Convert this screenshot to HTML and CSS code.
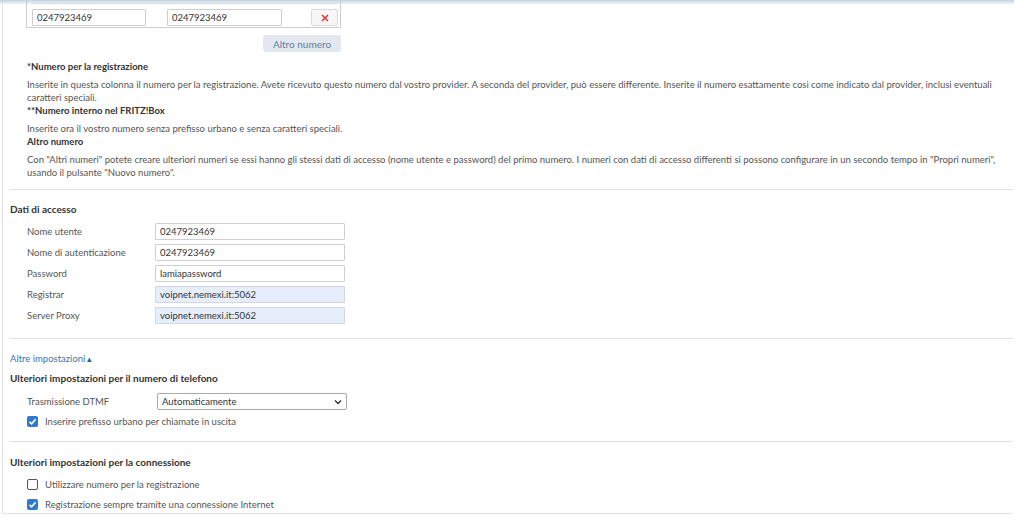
FILE: index.html
```html
<!DOCTYPE html>
<html lang="it">
<head>
    <meta charset="UTF-8">
    <title>Telefonia - Nuovo numero</title>
    <link rel="stylesheet" href="styles.css">
</head>
<body>
    <div class="topshade"></div>
    <div class="page">
        <div class="numbers">
            <div class="numbers-head"></div>
            <div class="numbers-row">
                <input type="text" class="num-reg" value="0247923469">
                <input type="text" class="num-int" value="0247923469">
                <button class="btn-delete" title="Elimina">
                    <svg width="8" height="8" viewBox="0 0 8 8"><path d="M1 1 L7 7 M7 1 L1 7" stroke="#e0313a" stroke-width="1.5"/></svg>
                </button>
            </div>
        </div>
        <div class="more-row">
            <button class="btn-more">Altro numero</button>
        </div>

        <div class="help">
            <h4>*Numero per la registrazione</h4>
            <p>Inserite in questa colonna il numero per la registrazione. Avete ricevuto questo numero dal vostro provider. A seconda del provider, può essere differente. Inserite il numero esattamente così come indicato dal provider, inclusi eventuali<br>caratteri speciali.</p>
            <h4>**Numero interno nel FRITZ!Box</h4>
            <p>Inserite ora il vostro numero senza prefisso urbano e senza caratteri speciali.</p>
            <h4>Altro numero</h4>
            <p>Con "Altri numeri" potete creare ulteriori numeri se essi hanno gli stessi dati di accesso (nome utente e password) del primo numero. I numeri con dati di accesso differenti si possono configurare in un secondo tempo in "Propri numeri",<br>usando il pulsante "Nuovo numero".</p>
        </div>

        <hr class="divider">

        <h3 class="section-title first">Dati di accesso</h3>
        <div class="form-rows">
            <div class="form-row">
                <label for="user">Nome utente</label>
                <input type="text" id="user" value="0247923469">
            </div>
            <div class="form-row">
                <label for="auth">Nome di autenticazione</label>
                <input type="text" id="auth" value="0247923469">
            </div>
            <div class="form-row">
                <label for="pass">Password</label>
                <input type="text" id="pass" value="lamiapassword">
            </div>
            <div class="form-row">
                <label for="registrar">Registrar</label>
                <input type="text" id="registrar" class="filled" value="voipnet.nemexi.it:5062">
            </div>
            <div class="form-row">
                <label for="proxy">Server Proxy</label>
                <input type="text" id="proxy" class="filled" value="voipnet.nemexi.it:5062">
            </div>
        </div>

        <hr class="divider divider-b">

        <a href="#" class="toggle-link">Altre impostazioni<span class="caret">&#9652;</span></a>
        <h3 class="section-title">Ulteriori impostazioni per il numero di telefono</h3>
        <div class="select-row">
            <label for="dtmf">Trasmissione DTMF</label>
            <div class="select-box">
                <select id="dtmf">
                    <option>Automaticamente</option>
                    <option>Inband</option>
                    <option>RFC 2833</option>
                    <option>SIP INFO</option>
                </select>
                <svg class="chev" width="8" height="6" viewBox="0 0 8 6"><path d="M1 1.5 L4 4.5 L7 1.5" fill="none" stroke="#333" stroke-width="1.4"/></svg>
            </div>
        </div>
        <label class="check first-check">
            <input type="checkbox" checked>
            <span class="box"></span>
            Inserire prefisso urbano per chiamate in uscita
        </label>

        <hr class="divider divider-c">

        <h3 class="section-title conn">Ulteriori impostazioni per la connessione</h3>
        <label class="check conn-check">
            <input type="checkbox">
            <span class="box"></span>
            Utilizzare numero per la registrazione
        </label>
        <label class="check conn-check2">
            <input type="checkbox" checked>
            <span class="box"></span>
            Registrazione sempre tramite una connessione Internet
        </label>
    </div>
</body>
</html>
```

FILE: styles.css
```css
body {
    margin: 0;
    font-family: Lato, "Open Sans", sans-serif;
    font-size: 9.5px;
    line-height: 13px;
    color: #555;
    background: #fff;
}
.topshade {
    position: absolute;
    top: 0;
    left: 0;
    width: 1014px;
    height: 5px;
    background: linear-gradient(#c3d2e1, rgba(220, 230, 240, 0));
}
.page {
    width: 1003px;
    margin-left: 2px;
    padding: 0 0 2px 7px;
    border-left: 1px solid #e2e2e2;
    border-bottom: 1px solid #e2e2e2;
}
input, select, button {
    font-family: inherit;
    font-size: 9.5px;
}
input[type="text"] {
    box-sizing: border-box;
    height: 17px;
    margin: 0;
    padding: 0 4px;
    border: 1px solid #cfcfcf;
    border-radius: 1px;
    color: #333;
    background: #fff;
}
input.filled {
    background: #e6eefc;
    border-color: #d3d8e0;
}

/* number table */
.numbers {
    box-sizing: border-box;
    width: 315px;
    margin-left: 16px;
    padding: 0 2px 1px 5px;
    border: 1px solid #cdcdcd;
    border-top: none;
}
.numbers-head {
    height: 3px;
    border-bottom: 1px solid #e4e4e4;
}
.numbers-row {
    display: flex;
    align-items: center;
    padding-top: 5px;
}
.num-reg {
    width: 114px;
}
.num-int {
    width: 115px;
    margin-left: 21px !important;
}
.btn-delete {
    display: flex;
    align-items: center;
    justify-content: center;
    margin-left: auto;
    width: 27px;
    height: 17px;
    padding: 0;
    border: 1px solid #dadada;
    border-radius: 2px;
    background: #f7f7f7;
}
.more-row {
    width: 331px;
    display: flex;
    justify-content: flex-end;
    margin-top: 7px;
}
.btn-more {
    width: 78px;
    height: 17px;
    padding: 0;
    border: none;
    border-radius: 3px;
    background: #e3e8ee;
    color: #5d7fa3;
    font-size: 10px;
}

/* help text */
.help {
    margin: 8px 0 0 17px;
}
.help h4 {
    margin: 0 0 5px;
    font-size: 9.5px;
    font-weight: bold;
    color: #333;
}
.help p {
    margin: 0;
}

.divider {
    margin: 10px 0 0 0;
    height: 0;
    border: none;
    border-top: 1px solid #e0e0e0;
}
.divider-b {
    margin-top: 14px;
}
.divider-c {
    margin-top: 13px;
}

.section-title {
    margin: 7px 0 0;
    font-size: 10px;
    font-weight: bold;
    color: #333;
}
.section-title.first {
    margin-top: 13px;
}
.section-title.conn {
    margin-top: 14px;
}

/* access data */
.form-rows {
    margin: 7px 0 0 17px;
}
.form-row {
    display: flex;
    align-items: center;
    margin-bottom: 4px;
}
.form-row label {
    width: 128px;
}
.form-row input {
    width: 190px;
}

.toggle-link {
    display: block;
    margin-top: 13px;
    color: #4473a8;
    text-decoration: none;
}
.caret {
    font-size: 9px;
    margin-left: 2px;
    color: #2e5f96;
}

/* extra settings */
.select-row {
    display: flex;
    align-items: center;
    margin: 8px 0 0 17px;
}
.select-row label {
    width: 130px;
}
.select-box {
    position: relative;
    width: 190px;
    height: 17px;
}
.select-box select {
    box-sizing: border-box;
    width: 100%;
    height: 17px;
    padding: 0 4px;
    border: 1px solid #a9a9a9;
    border-radius: 2px;
    background: #fff;
    color: #333;
    appearance: none;
}
.chev {
    position: absolute;
    right: 5px;
    top: 6px;
}

.check {
    display: flex;
    align-items: center;
    margin-left: 17px;
    color: #555;
}
.check input {
    display: none;
}
.check .box {
    box-sizing: border-box;
    width: 11px;
    height: 11px;
    margin-right: 7px;
    border: 1.5px solid #555;
    border-radius: 2px;
}
.check input:checked + .box {
    border: none;
    background: #2f7ad0 url("data:image/svg+xml,%3Csvg xmlns='http://www.w3.org/2000/svg' width='11' height='11'%3E%3Cpath d='M2.5 5.8 L4.6 7.8 L8.6 3.2' fill='none' stroke='white' stroke-width='1.6'/%3E%3C/svg%3E") no-repeat center;
}
.first-check {
    margin-top: 5px;
}
.conn-check {
    margin-top: 9px;
}
.conn-check2 {
    margin-top: 7px;
}
```
